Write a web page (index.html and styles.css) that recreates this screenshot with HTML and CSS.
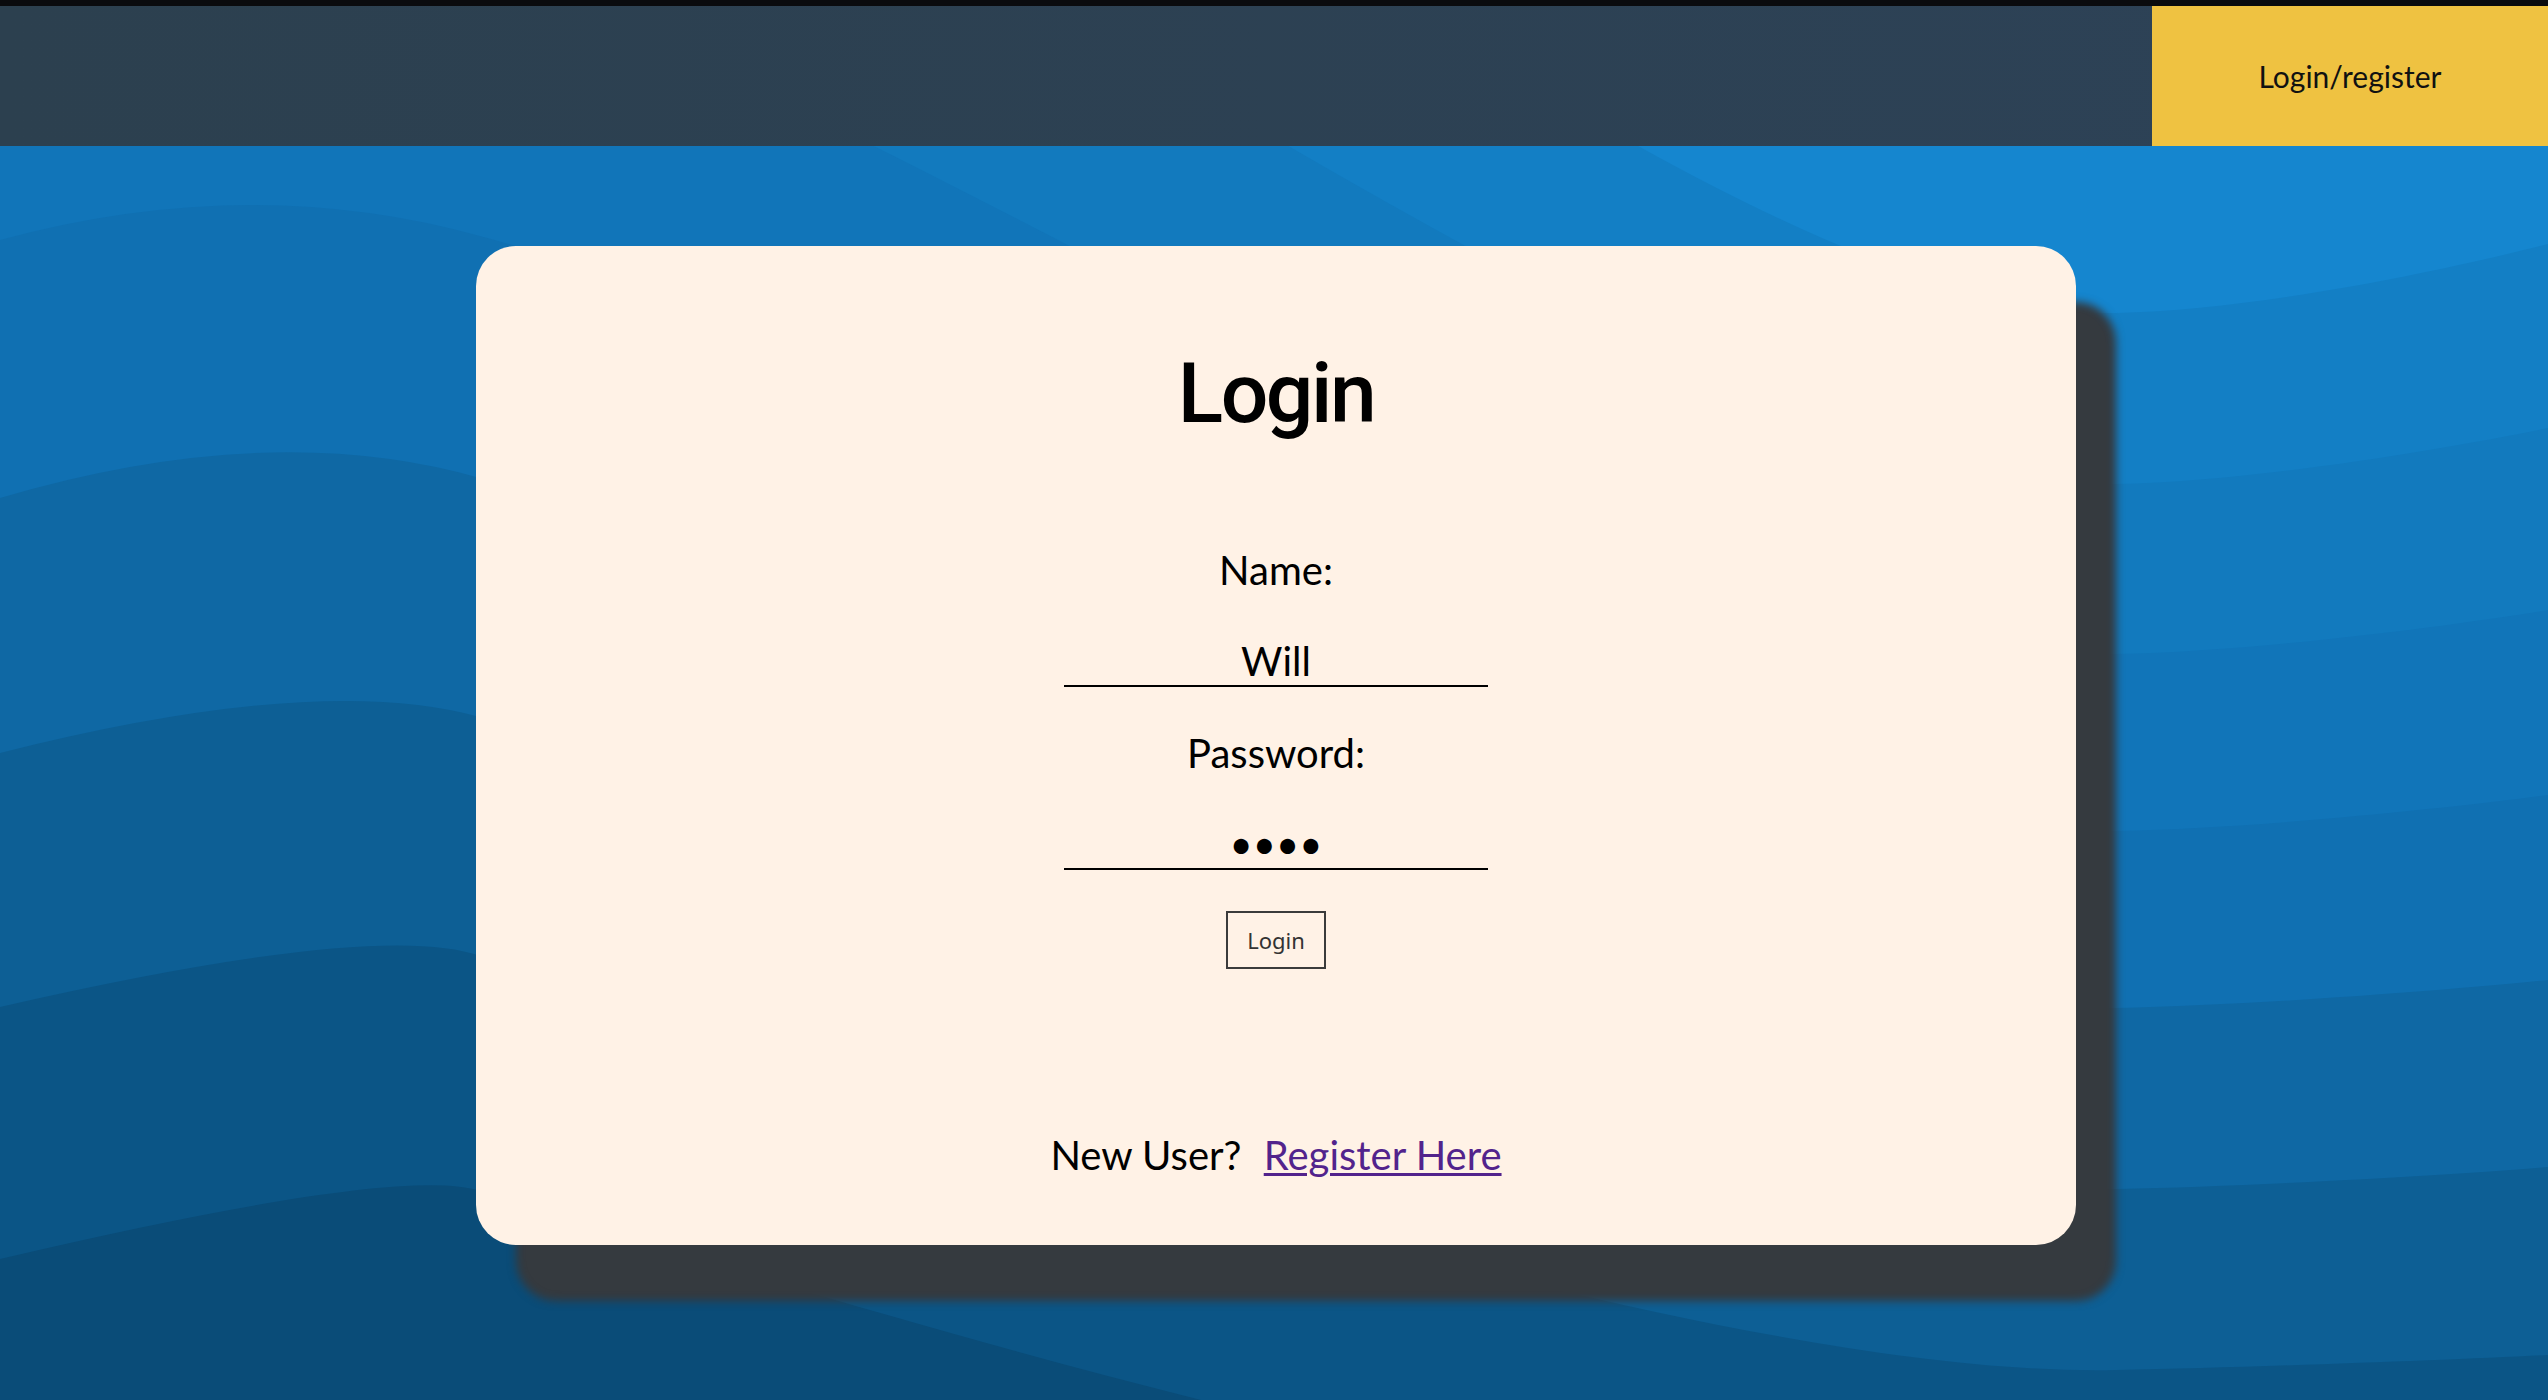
FILE: index.html
```html
<!DOCTYPE html>
<html lang="en">
<head>
<meta charset="utf-8">
<title>Login</title>
<link rel="stylesheet" href="styles.css">
</head>
<body>
<div class="topbar"></div>
<header class="header">
  <a class="nav-btn" href="#">Login/register</a>
</header>
<main class="stage">
  <svg class="waves" viewBox="0 146 2548 1254" preserveAspectRatio="none" aria-hidden="true">
    <rect x="0" y="146" width="2548" height="1254" fill="#1586cf"/>
    <path fill="#137fc5" d="M0,-525 Q250,-590 480,-529 C880,-423 1700,322 2116,313 C2260,310 2450,269 2548,244 L2548,1500 L0,1500 Z"/>
    <path fill="#127abe" d="M0,-270 Q250,-335 480,-274 C880,-168 1700,493 2116,484 C2260,481 2450,448 2548,428 L2548,1500 L0,1500 Z"/>
    <path fill="#1175b9" d="M0,-15 Q250,-80 480,-19 C880,87 1700,663 2116,654 C2260,651 2450,626 2548,610 L2548,1500 L0,1500 Z"/>
    <path fill="#1070b2" d="M0,240 Q250,172 480,236 C880,342 1700,840 2116,831 C2260,828 2450,808 2548,795 L2548,1500 L0,1500 Z"/>
    <path fill="#0f68a4" d="M0,498 Q270,418 480,478 C880,592 1700,1017 2116,1008 C2260,1005 2450,990 2548,980 L2548,1500 L0,1500 Z"/>
    <path fill="#0d5f95" d="M0,753 Q320,672 480,717 C880,829 1700,1198 2116,1189 C2260,1186 2450,1175 2548,1167 L2548,1500 L0,1500 Z"/>
    <path fill="#0b5586" d="M0,1007 Q380,920 480,956 C880,1100 1700,1379 2116,1370 C2260,1367 2450,1360 2548,1355 L2548,1500 L0,1500 Z"/>
    <path fill="#0a4c78" d="M0,1259 Q400,1165 480,1191 C880,1321 1700,1559 2116,1550 C2260,1547 2450,1544 2548,1540 L2548,1600 L0,1600 Z"/>
  </svg>
  <section class="card">
    <h1 class="title">Login</h1>
    <form class="form">
      <label class="label" for="name">Name:</label>
      <input class="field" id="name" type="text" value="Will">
      <label class="label label-gap" for="pw">Password:</label>
      <input class="field" id="pw" type="password" value="will">
      <button class="btn" type="button">Login</button>
    </form>
    <p class="signup">New User? <a class="link" href="#">Register Here</a></p>
  </section>
</main>
</body>
</html>
```

FILE: styles.css
```css
html, body {
  margin: 0;
  padding: 0;
}

body {
  background: #000;
  font-family: Lato, "Noto Sans", sans-serif;
  overflow: hidden;
}

.topbar {
  height: 6px;
  background: #0a0b0e;
}

.header {
  height: 140px;
  display: flex;
  justify-content: flex-end;
  background: linear-gradient(90deg, #2c404f, #2d4257);
}

.nav-btn {
  width: 396px;
  display: flex;
  align-items: center;
  justify-content: center;
  background: #efc241;
  color: #111;
  font-size: 30px;
  text-decoration: none;
}

.stage {
  position: relative;
  height: 1254px;
  box-sizing: border-box;
  padding: 100px 0 0 4px;
  display: flex;
  justify-content: center;
  align-items: flex-start;
  overflow: hidden;
}

.waves {
  position: absolute;
  inset: 0;
  width: 100%;
  height: 100%;
  display: block;
}

.card {
  position: relative;
  width: 1600px;
  height: 999px;
  box-sizing: border-box;
  padding-top: 97px;
  background: #fff2e6;
  border-radius: 40px;
  box-shadow: 40px 56px 8px #353a3f;
  display: flex;
  flex-direction: column;
  align-items: center;
}

.title {
  margin: 0;
  font-family: Roboto, "Noto Sans", sans-serif;
  font-weight: 500;
  font-size: 84px;
  line-height: 102px;
  letter-spacing: -2.5px;
  color: #000;
}

.form {
  margin-top: 102px;
  display: flex;
  flex-direction: column;
  align-items: center;
}

.label {
  font-size: 40px;
  line-height: 46px;
  color: #000;
}

.label-gap {
  margin-top: 43px;
}

.field {
  margin-top: 45px;
  width: 424px;
  height: 46px;
  padding: 0 0 1px;
  border: none;
  border-bottom: 2px solid #000;
  background: transparent;
  font-family: Lato, "Noto Sans", sans-serif;
  font-size: 40px;
  line-height: 46px;
  color: #000;
  text-align: center;
  outline: none;
}

.btn {
  margin-top: 41px;
  width: 100px;
  height: 58px;
  box-sizing: border-box;
  padding: 0;
  border: 2px solid #3b3b3b;
  background: transparent;
  font-family: "Noto Sans", sans-serif;
  font-size: 22px;
  color: #333;
}

.signup {
  margin: 163px 0 0;
  font-size: 40px;
  line-height: 46px;
  color: #000;
}

.link {
  margin-left: 12px;
  color: #52238c;
  text-decoration-thickness: 3px;
  text-underline-offset: 3px;
}
```
